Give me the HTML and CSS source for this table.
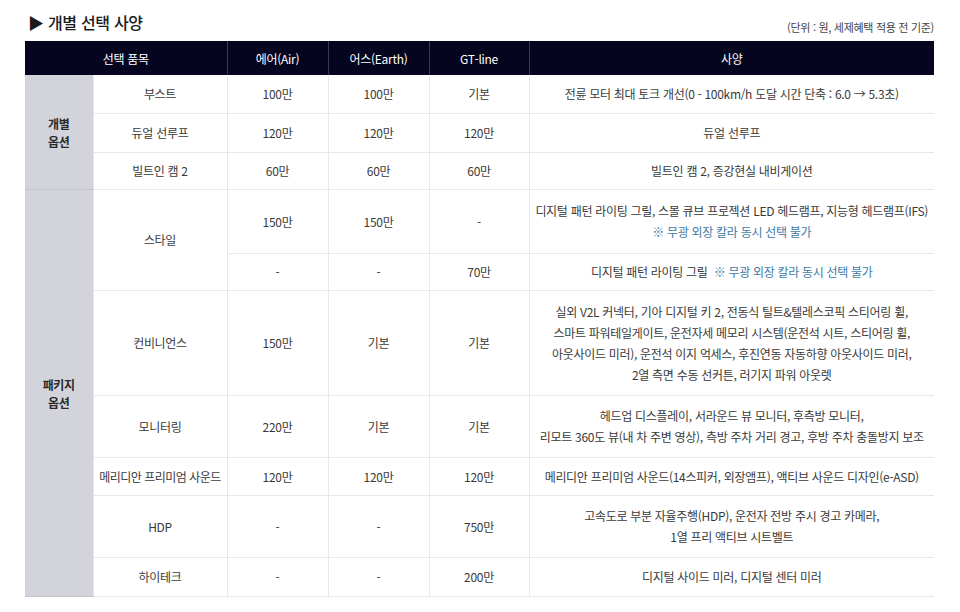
FILE: index.html
```html
<!DOCTYPE html>
<html lang="ko">
<head>
<meta charset="utf-8">
<link rel="stylesheet" href="styles.css">
</head>
<body>
<div class="page">
  <div class="top">
    <h2 class="title">▶ 개별 선택 사양</h2>
    <span class="unit">(단위 : 원, 세제혜택 적용 전 기준)</span>
  </div>
  <table class="spec">
    <colgroup>
      <col class="c-group"><col class="c-item"><col class="c-trim"><col class="c-trim"><col class="c-gt"><col class="c-spec">
    </colgroup>
    <thead>
      <tr class="h-head">
        <th colspan="2">선택 품목</th>
        <th>에어(Air)</th>
        <th>어스(Earth)</th>
        <th>GT-line</th>
        <th>사양</th>
      </tr>
    </thead>
    <tbody>
      <tr class="h38">
        <td class="group" rowspan="3">개별<br>옵션</td>
        <td>부스트</td><td>100만</td><td>100만</td><td>기본</td>
        <td>전륜 모터 최대 토크 개선(0 - 100km/h 도달 시간 단축 : 6.0 → 5.3초)</td>
      </tr>
      <tr class="h39">
        <td>듀얼 선루프</td><td>120만</td><td>120만</td><td>120만</td>
        <td>듀얼 선루프</td>
      </tr>
      <tr class="h37">
        <td>빌트인 캠 2</td><td>60만</td><td>60만</td><td>60만</td>
        <td>빌트인 캠 2, 증강현실 내비게이션</td>
      </tr>
      <tr class="h64 sep">
        <td class="group" rowspan="8">패키지<br>옵션</td>
        <td rowspan="2">스타일</td><td>150만</td><td>150만</td><td>-</td>
        <td>디지털 패턴 라이팅 그릴, 스몰 큐브 프로젝션 LED 헤드램프, 지능형 헤드램프(IFS)<br><span class="note">※ 무광 외장 칼라 동시 선택 불가</span></td>
      </tr>
      <tr class="h37">
        <td>-</td><td>-</td><td>70만</td>
        <td>디지털 패턴 라이팅 그릴 &nbsp;<span class="note">※ 무광 외장 칼라 동시 선택 불가</span></td>
      </tr>
      <tr class="h105">
        <td>컨비니언스</td><td>150만</td><td>기본</td><td>기본</td>
        <td>실외 V2L 커넥터, 기아 디지털 키 2, 전동식 틸트&amp;텔레스코픽 스티어링 휠,<br>스마트 파워테일게이트, 운전자세 메모리 시스템(운전석 시트, 스티어링 휠,<br>아웃사이드 미러), 운전석 이지 억세스, 후진연동 자동하향 아웃사이드 미러,<br>2열 측면 수동 선커튼, 러기지 파워 아웃렛</td>
      </tr>
      <tr class="h62">
        <td>모니터링</td><td>220만</td><td>기본</td><td>기본</td>
        <td>헤드업 디스플레이, 서라운드 뷰 모니터, 후측방 모니터,<br>리모트 360도 뷰(내 차 주변 영상), 측방 주차 거리 경고, 후방 주차 충돌방지 보조</td>
      </tr>
      <tr class="h38">
        <td class="tight">메리디안 프리미엄 사운드</td><td>120만</td><td>120만</td><td>120만</td>
        <td>메리디안 프리미엄 사운드(14스피커, 외장앰프), 액티브 사운드 디자인(e-ASD)</td>
      </tr>
      <tr class="h62">
        <td>HDP</td><td>-</td><td>-</td><td>750만</td>
        <td>고속도로 부분 자율주행(HDP), 운전자 전방 주시 경고 카메라,<br>1열 프리 액티브 시트벨트</td>
      </tr>
      <tr class="h39">
        <td>하이테크</td><td>-</td><td>-</td><td>200만</td>
        <td>디지털 사이드 미러, 디지털 센터 미러</td>
      </tr>
    </tbody>
  </table>
</div>
</body>
</html>
```

FILE: styles.css
```css
* { box-sizing: border-box; }
html, body { margin: 0; padding: 0; background: #ffffff; }
body {
  font-family: "Noto Sans CJK KR", "Noto Sans", sans-serif;
  color: #333333;
}
.page {
  padding: 10px 26px 0 25px;
  width: 960px;
}
.top {
  display: flex;
  justify-content: space-between;
  align-items: flex-end;
  height: 31px;
}
.title {
  margin: 0 0 0 3px;
  font-size: 16px;
  font-weight: 500;
  color: #1a1a1a;
  line-height: 24px;
  letter-spacing: -0.3px;
  align-self: flex-start;
}
.unit {
  font-size: 11px;
  color: #444444;
  line-height: 16px;
  margin-bottom: 6px;
  letter-spacing: -0.3px;
}
.spec {
  width: 909px;
  border-collapse: collapse;
  table-layout: fixed;
  font-size: 12px;
  letter-spacing: -0.3px;
  line-height: 21px;
  text-align: center;
}
.c-group { width: 68px; }
.c-item { width: 134px; }
.c-trim { width: 101px; }
.c-gt { width: 100px; }
.c-spec { width: 405px; }
.spec th {
  background: #05051f;
  color: #ffffff;
  font-weight: 400;
  height: 34px;
  padding: 0;
  border-left: 1px solid #3a3a50;
}
.spec th:first-child { border-left: none; }
.spec td {
  padding: 0 4px;
  border-bottom: 1px solid #e8e8ec;
  border-left: 1px solid #e8e8ec;
  color: #3a3a3a;
}
.spec td.group {
  background: #d3d4db;
  color: #2a2a2a;
  font-weight: 700;
  border-left: none;
  border-bottom: 1px solid #c4c5cd;
  line-height: 18px;
  padding: 2px 0 0 0;
}
.spec td.tight { padding: 0 1px; letter-spacing: -0.5px; }
.note { color: #3f7aa6; }
.h37 { height: 37px; }
.h38 { height: 38px; }
.h39 { height: 39px; }
.h62 { height: 62px; }
.h64 { height: 64px; }
.h105 { height: 105px; }
```
